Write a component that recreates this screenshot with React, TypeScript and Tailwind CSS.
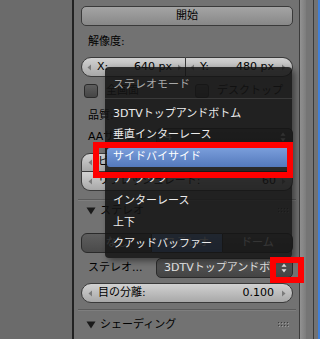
import React from 'react';

const Tri = ({ dir }: { dir: 'l' | 'r' }) => (
  <svg width="5" height="7" viewBox="0 0 5 7" className="shrink-0">
    <path d={dir === 'l' ? 'M4 0.5L0.5 3.5L4 6.5Z' : 'M1 0.5L4.5 3.5L1 6.5Z'} fill="#7a7a7a" />
  </svg>
);

const UpDown = () => (
  <svg width="6" height="10" viewBox="0 0 6 10" className="shrink-0">
    <path d="M3 0.5L5.5 3.8H0.5Z" fill="#e0e0e0" />
    <path d="M3 9.5L5.5 6.2H0.5Z" fill="#e0e0e0" />
  </svg>
);

const Grip = () => (
  <svg width="12" height="6" viewBox="0 0 12 6">
    {[0, 3, 6, 9].map((x) =>
      [0, 3].map((y) => (
        <g key={`${x}-${y}`}>
          <rect x={x + 1} y={y + 1} width="1" height="1" fill="#9a9a9a" />
          <rect x={x} y={y} width="1" height="1" fill="#3c3c3c" />
        </g>
      ))
    )}
  </svg>
);

const Header = ({ title }: { title: string }) => (
  <div className="flex items-center h-[18px] pl-[5px] pr-[3px] text-black">
    <svg width="10" height="8" viewBox="0 0 10 8" className="shrink-0">
      <path d="M0.5 0.5H9.5L5 7.5Z" fill="#1a1a1a" />
    </svg>
    <span className="ml-[4px] flex-1">{title}</span>
    <Grip />
  </div>
);

const Label = ({ text }: { text: string }) => (
  <div className="h-[20px] flex items-center pl-[7px] text-black">{text}</div>
);

const fieldBg = 'bg-linear-to-b from-[#d2d2d2] to-[#a8a8a8] border border-[#3a3a3a]';

export default function App() {
  const items = [
    '3DTVトップアンドボトム',
    '垂直インターレース',
    'サイドバイサイド',
    'アナグリフ',
    'インターレース',
    '上下',
    'クアッドバッファー',
  ];

  return (
    <div className="relative w-[320px] h-[339px] overflow-hidden flex text-[11px] font-['DejaVu_Sans','Noto_Sans_CJK_JP',sans-serif]">
      <div className="w-[72px] bg-[#6b6b6b]" />
      <div className="w-[2px] bg-[#222222]" />

      {/* properties panel */}
      <div className="w-[225px] bg-[#727272] pl-[7px] pr-[6px]">
        <div className="w-[212px] flex flex-col">
          <div className="mt-[6px] h-[20px] rounded-[5px] border border-[#3a3a3a] bg-linear-to-b from-[#a4a4a4] to-[#888888] flex items-center justify-center text-black">
            開始
          </div>

          <div className="mt-[6px]">
            <Label text="解像度:" />
          </div>

          <div className="mt-[5px] h-[20px] flex">
            <div className={`w-[105px] rounded-l-full ${fieldBg} flex items-center pl-[5px] pr-[3px] text-black`}>
              <Tri dir="l" />
              <span className="ml-[5px]">X:</span>
              <span className="flex-1 text-right mr-[5px]">640 px</span>
              <Tri dir="r" />
            </div>
            <div className={`flex-1 rounded-r-full border-l-0 ${fieldBg} flex items-center pl-[4px] pr-[6px] text-black`}>
              <Tri dir="l" />
              <span className="ml-[5px]">Y:</span>
              <span className="flex-1 text-right mr-[7px]">480 px</span>
              <Tri dir="r" />
            </div>
          </div>

          <div className="mt-[4px] h-[20px] flex items-center text-black">
            <div className="w-[111px] flex items-center pl-[3px]">
              <div className="w-[14px] h-[14px] rounded-[3px] border border-[#2a2a2a] bg-linear-to-b from-[#5e5e5e] to-[#454545]" />
              <span className="ml-[8px]">全画面</span>
            </div>
            <div className="flex items-center pl-[3px]">
              <div className="w-[14px] h-[14px] rounded-[3px] border border-[#2a2a2a] bg-linear-to-b from-[#5e5e5e] to-[#454545]" />
              <span className="ml-[8px]">デスクトップ</span>
            </div>
          </div>

          <div className="mt-[5px]">
            <Label text="品質:" />
          </div>

          <div className="mt-[1px] h-[20px] flex items-center">
            <div className="w-[75px] pl-[7px] text-black">AAサンプル:</div>
            <div className="flex-1 h-[19px] rounded-[5px] border border-[#2a2a2a] bg-linear-to-b from-[#575757] to-[#444444] flex items-center pl-[8px] pr-[6px] text-[#e6e6e6]">
              <span className="flex-1">4</span>
              <UpDown />
            </div>
          </div>

          <div className="mt-[6px] flex flex-col">
            <div className={`h-[19px] rounded-t-[9px] ${fieldBg} flex items-center pl-[6px] pr-[6px] text-black`}>
              <Tri dir="l" />
              <span className="ml-[5px] flex-1">ビット深度:</span>
              <span className="mr-[5px]">32</span>
              <Tri dir="r" />
            </div>
            <div className={`h-[19px] rounded-b-[9px] border-t-0 ${fieldBg} flex items-center pl-[6px] pr-[6px] text-black`}>
              <Tri dir="l" />
              <span className="ml-[5px] flex-1">リフレッシュレート:</span>
              <span className="mr-[5px]">60</span>
              <Tri dir="r" />
            </div>
          </div>

          <div className="mt-[8px] -mx-[3px] h-px bg-[#5a5a5a]" />
          <div className="-mx-[3px] h-px bg-[#7e7e7e]" />

          <div className="mt-[1px]">
            <Header title="ステレオ" />
          </div>

          <div className="mt-[13px] h-[20px] flex text-white">
            <div className="flex-1 rounded-l-[6px] border border-[#2a2a2a] bg-linear-to-b from-[#5e5e5e] to-[#4a4a4a] flex items-center justify-center">
              なし
            </div>
            <div className="flex-1 border-y border-[#2a2a2a] bg-linear-to-b from-[#6c96d6] to-[#5680c2] flex items-center justify-center">
              ステレオ
            </div>
            <div className="flex-1 rounded-r-[6px] border border-[#2a2a2a] bg-linear-to-b from-[#5e5e5e] to-[#4a4a4a] flex items-center justify-center">
              ドーム
            </div>
          </div>

          <div className="mt-[5px] h-[20px] flex items-center">
            <div className="w-[75px] pl-[7px] text-black">ステレオ...</div>
            <div className="flex-1 h-[20px] rounded-[5px] border border-[#2a2a2a] bg-linear-to-b from-[#575757] to-[#444444] flex items-center pl-[7px] pr-[5px] text-[#e6e6e6]">
              <span className="flex-1 whitespace-nowrap overflow-hidden">3DTVトップアンドボ.</span>
              <UpDown />
            </div>
          </div>

          <div className={`mt-[5px] h-[20px] rounded-full ${fieldBg} flex items-center pl-[6px] pr-[6px] text-black`}>
            <Tri dir="l" />
            <span className="ml-[5px] flex-1">目の分離:</span>
            <span className="mr-[7px]">0.100</span>
            <Tri dir="r" />
          </div>

          <div className="mt-[6px] -mx-[3px] h-px bg-[#5a5a5a]" />
          <div className="-mx-[3px] h-px bg-[#7e7e7e]" />

          <div className="mt-[5px]">
            <Header title="シェーディング" />
          </div>
        </div>
      </div>

      {/* region edges */}
      <div className="w-[1px] bg-[#3c3c3c]" />
      <div className="w-[6px] bg-linear-to-r from-[#929292] to-[#7c7c7c]" />
      <div className="w-[7px] bg-[#757575]" />
      <div className="w-[1px] bg-[#3a3a3a]" />
      <div className="w-[4px] bg-[#727272]" />
      <div className="w-[2px] bg-[#3f7fd8]" />

      {/* popup menu */}
      <div className="absolute left-[105px] top-[67px] w-[187px] h-[191px] rounded-[4px] bg-[#141414]/[0.86] shadow-[3px_3px_6px_rgba(0,0,0,0.45)]">
        <div className="pt-[8px]">
          <div className="h-[20px] flex items-center pl-[8px] text-[#a8a8a8]">ステレオモード</div>
          <div className="mt-[3px] h-px bg-[#3a3a3a]" />
          <div className="mt-[4px] px-[2px]">
            {items.map((t, i) => (
              <div key={t} className="h-[21.8px] py-[1px]">
                <div
                  className={
                    i === 2
                      ? 'h-full rounded-[3px] bg-linear-to-b from-[#7a9edb] to-[#5479bc] flex items-center pl-[6px] text-white'
                      : 'h-full flex items-center pl-[6px] text-[#ececec]'
                  }
                >
                  {t}
                </div>
              </div>
            ))}
          </div>
        </div>
      </div>

      {/* red callouts */}
      <div className="absolute left-[93px] top-[142px] w-[200px] h-[36px] border-[6px] border-[#ff0000]" />
      <div className="absolute left-[270px] top-[257px] w-[34px] h-[26px] border-[6px] border-[#ff0000]" />
    </div>
  );
}
